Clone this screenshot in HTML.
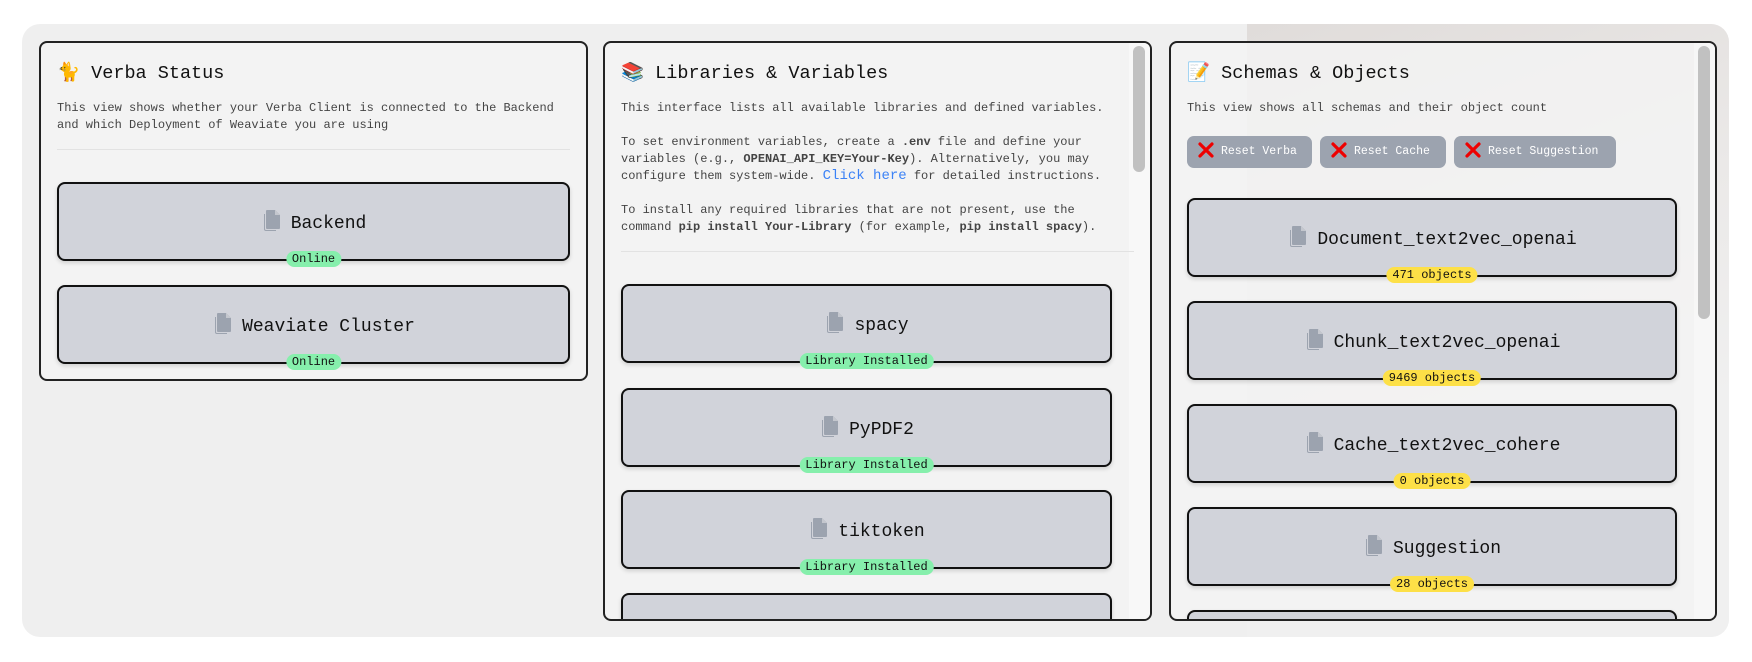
<!DOCTYPE html>
<html><head><meta charset="utf-8"><style>
*{box-sizing:border-box;margin:0;padding:0}
body{width:1752px;height:662px;background:#fff;font-family:"Liberation Mono",monospace;color:#111;overflow:hidden;position:relative}
.outer{position:absolute;left:22px;top:24px;width:1707px;height:613px;background:#efefef;border-radius:18px;overflow:hidden}
.blob{position:absolute;left:1225px;top:0;width:482px;height:613px;background:linear-gradient(160deg,#e0dcda 0%,#ebe9e8 40%,#f0f0f0 70%);}
.panel{position:absolute;top:17px;border:2px solid #222;border-radius:8px;background:#f3f3f3;overflow:hidden}
.p1{left:17px;width:549px;height:340px}
.p2{left:581px;width:549px;height:580px}
.p3{left:1147px;width:548px;height:580px;background:rgba(243,243,243,.85)}
h2{position:absolute;left:16px;top:18px;font-size:18.5px;font-weight:normal;white-space:nowrap}
.desc{position:absolute;left:16px;font-size:12px;line-height:17px;color:#444;white-space:pre}
.div{position:absolute;left:16px;right:16px;height:1px;background:#e2e2e2}
.card{position:absolute;left:16px;right:16px;height:79px;background:#d1d3da;border:2px solid #111;border-radius:8px;box-shadow:0 2px 4px rgba(0,0,0,.15)}
.p2 .card,.p3 .card{right:38px}
.ct{position:absolute;left:0;right:0;top:26px;text-align:center;font-size:18px;white-space:nowrap}
.ct svg{vertical-align:-3px;margin-right:10px}
.badge{position:absolute;left:50%;transform:translateX(-50%);bottom:-8px;font-size:12px;padding:1px 6px;border-radius:8px;white-space:nowrap;line-height:14px}
.g{background:#86efac}.y{background:#fde047}
.btn{position:absolute;top:93px;height:32px;background:#9ca3af;color:#fff;border-radius:7px;font-size:11.5px;line-height:32px;padding-left:11px;white-space:nowrap}
.btn svg{vertical-align:-4px;margin-right:7px}
.sb{position:absolute;width:12px;background:#c1c1c1;border-radius:6px;right:5px;top:3px}
.track{position:absolute;right:0;top:0;bottom:0;width:21px;background:#f8f8f8}
a{color:#3b82f6;text-decoration:none;font-size:14px}
</style></head><body>
<div class="outer">
<div class="blob"></div>
<svg width="0" height="0" style="position:absolute"><defs><g id="ic"><path d="M6 0h8l5 5v13a1 1 0 0 1-1 1H6a1 1 0 0 1-1-1V1a1 1 0 0 1 1-1z" fill="#9ca3af"/><path d="M14 0v5h5z" fill="#c4c7ce"/><path d="M3 4v15a2 2 0 0 0 2 2h10v-1H5a1 1 0 0 1-1-1V4z" fill="#9ca3af"/></g>
<g id="x"><path d="M2 2L14 14M14 2L2 14" stroke="#e00" stroke-width="3.2" stroke-linecap="round"/></g></defs></svg>

<div class="panel p1">
<h2>🐈 Verba Status</h2>
<div class="desc" style="top:57px">This view shows whether your Verba Client is connected to the Backend
and which Deployment of Weaviate you are using</div>
<div class="div" style="top:106px"></div>
<div class="card" style="top:139px"><div class="ct"><svg width="20" height="21"><use href="#ic"/></svg>Backend</div><div class="badge g">Online</div></div>
<div class="card" style="top:242px"><div class="ct"><svg width="20" height="21"><use href="#ic"/></svg>Weaviate Cluster</div><div class="badge g">Online</div></div>
</div>

<div class="panel p2">
<div class="track"><div class="sb" style="height:126px"></div></div>
<h2>📚 Libraries &amp; Variables</h2>
<div class="desc" style="top:57px">This interface lists all available libraries and defined variables.</div>
<div class="desc" style="top:91px">To set environment variables, create a <b>.env</b> file and define your
variables (e.g., <b>OPENAI_API_KEY=Your-Key</b>). Alternatively, you may
configure them system-wide. <a>Click here</a> for detailed instructions.</div>
<div class="desc" style="top:159px">To install any required libraries that are not present, use the
command <b>pip install Your-Library</b> (for example, <b>pip install spacy</b>).</div>
<div class="div" style="top:208px"></div>
<div class="card" style="top:241px"><div class="ct"><svg width="20" height="21"><use href="#ic"/></svg>spacy</div><div class="badge g">Library Installed</div></div>
<div class="card" style="top:345px"><div class="ct"><svg width="20" height="21"><use href="#ic"/></svg>PyPDF2</div><div class="badge g">Library Installed</div></div>
<div class="card" style="top:447px"><div class="ct"><svg width="20" height="21"><use href="#ic"/></svg>tiktoken</div><div class="badge g">Library Installed</div></div>
<div class="card" style="top:550px"></div>
</div>

<div class="panel p3">
<div class="track" style="background:rgba(248,248,248,.7)"><div class="sb" style="height:273px"></div></div>
<h2>📝 Schemas &amp; Objects</h2>
<div class="desc" style="top:57px">This view shows all schemas and their object count</div>
<div class="btn" style="left:16px;width:125px"><svg width="16" height="16"><use href="#x"/></svg>Reset Verba</div>
<div class="btn" style="left:149px;width:126px"><svg width="16" height="16"><use href="#x"/></svg>Reset Cache</div>
<div class="btn" style="left:283px;width:162px"><svg width="16" height="16"><use href="#x"/></svg>Reset Suggestion</div>
<div class="card" style="top:155px"><div class="ct"><svg width="20" height="21"><use href="#ic"/></svg>Document_text2vec_openai</div><div class="badge y">471 objects</div></div>
<div class="card" style="top:258px"><div class="ct"><svg width="20" height="21"><use href="#ic"/></svg>Chunk_text2vec_openai</div><div class="badge y">9469 objects</div></div>
<div class="card" style="top:361px"><div class="ct"><svg width="20" height="21"><use href="#ic"/></svg>Cache_text2vec_cohere</div><div class="badge y">0 objects</div></div>
<div class="card" style="top:464px"><div class="ct"><svg width="20" height="21"><use href="#ic"/></svg>Suggestion</div><div class="badge y">28 objects</div></div>
<div class="card" style="top:567px"></div>
</div>
</div>
</body></html>
